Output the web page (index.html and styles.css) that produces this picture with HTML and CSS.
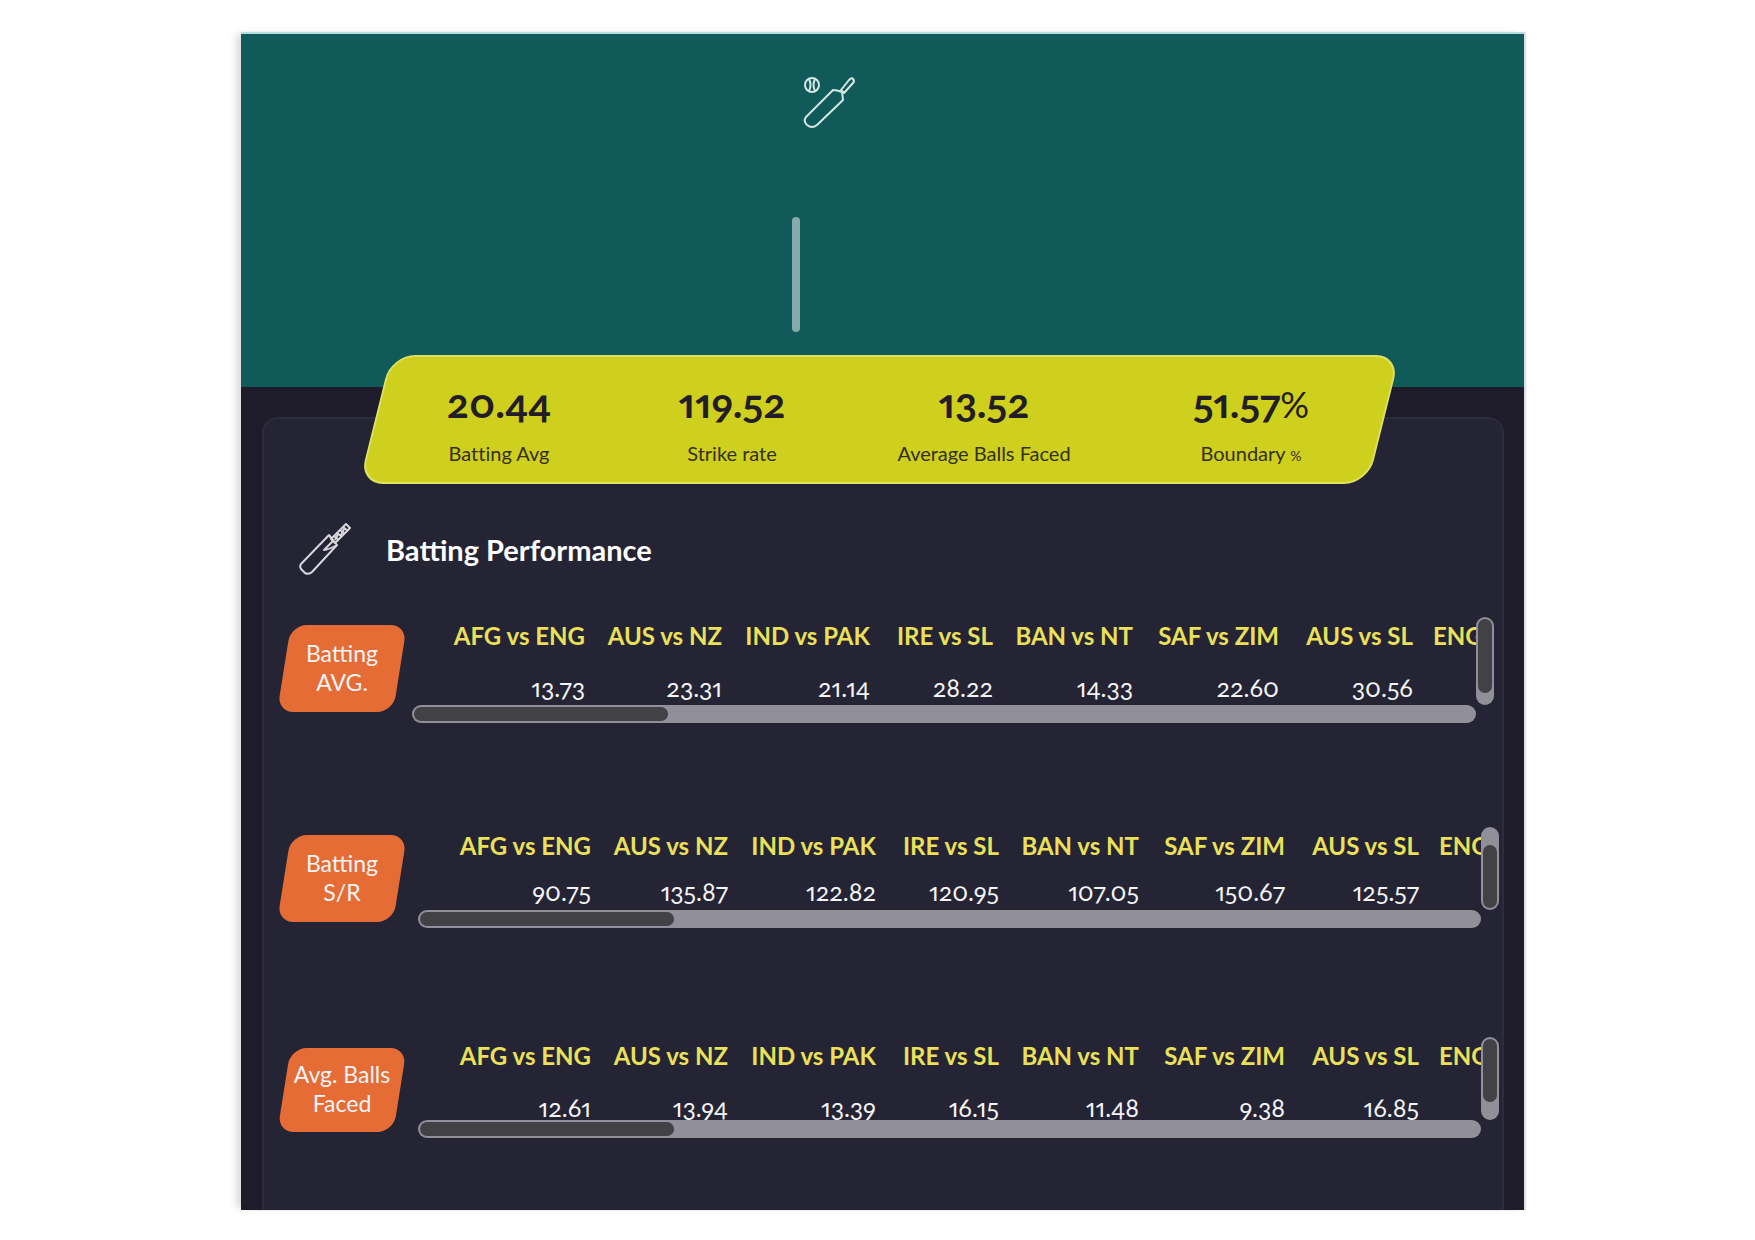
FILE: index.html
```
<!DOCTYPE html>
<html lang="en">
<head>
<meta charset="utf-8">
<meta name="viewport" content="width=device-width, initial-scale=1">
<title>Batting Performance</title>
<link rel="stylesheet" href="styles.css">
</head>
<body>
<main class="report">
  <header class="hero">
    <svg class="hero-icon" viewBox="0 0 54 56" aria-hidden="true">
      <circle cx="9" cy="10" r="7"/>
      <path d="M6 4q3 6 0 12M12 4q-3 6 0 12"/>
      <path d="M30 15L3 42Q0 46 4 50Q9 54 14 50L40 25L39 17Q34 15 30 15Z"/>
      <path d="M38 15L46 5Q49 2 50 4Q52 6 50 8L41 18Z"/>
    </svg>
    <div class="hero-divider"></div>
  </header>

  <section class="stats" aria-label="Batting summary">
    <div class="stat"><strong class="stat-value">20.44</strong><span class="stat-label">Batting Avg</span></div>
    <div class="stat"><strong class="stat-value">119.52</strong><span class="stat-label">Strike rate</span></div>
    <div class="stat"><strong class="stat-value">13.52</strong><span class="stat-label">Average Balls Faced</span></div>
    <div class="stat"><strong class="stat-value">51.57<span class="stat-unit">%</span></strong><span class="stat-label">Boundary <small class="stat-percent">%</small></span></div>
  </section>

  <section class="card">
    <div class="card-head">
      <svg class="card-icon" viewBox="0 0 54 56" aria-hidden="true">
        <path d="M31 13L3 42Q1 45 4 48L7 51Q11 53 14 50L39 23Z"/>
        <path d="M31 13L35 19L26 28Q30 28 39 23"/>
        <path d="M33 17L48 2L52 6L37 21Z"/>
        <path d="M36 14l5 4M39 11l5 4M42 8l5 4M45 5l5 4M37 18l3 -6M43 13l3 -6"/>
      </svg>
      <h1 class="card-title">Batting Performance</h1>
    </div>

    <div class="metric metric-avg">
      <div class="badge"><span>Batting<br>AVG.</span></div>
      <div class="scroller">
        <div class="viewport">
          <table class="matches">
            <colgroup><col class="c1"><col class="c2"><col class="c3"><col class="c4"><col class="c5"><col class="c6"><col class="c7"><col class="c8"></colgroup>
            <thead><tr><th>AFG vs ENG</th><th>AUS vs NZ</th><th>IND vs PAK</th><th>IRE vs SL</th><th>BAN vs NT</th><th>SAF vs ZIM</th><th>AUS vs SL</th><th class="last">ENG vs IND</th></tr></thead>
            <tbody><tr><td>13.73</td><td>23.31</td><td>21.14</td><td>28.22</td><td>14.33</td><td>22.60</td><td>30.56</td><td></td></tr></tbody>
          </table>
        </div>
        <div class="bar bar-y"><div class="thumb"></div></div>
        <div class="bar bar-x"><div class="thumb"></div></div>
      </div>
    </div>

    <div class="metric metric-rate">
      <div class="badge"><span>Batting<br>S/R</span></div>
      <div class="scroller">
        <div class="viewport">
          <table class="matches">
            <colgroup><col class="c1"><col class="c2"><col class="c3"><col class="c4"><col class="c5"><col class="c6"><col class="c7"><col class="c8"></colgroup>
            <thead><tr><th>AFG vs ENG</th><th>AUS vs NZ</th><th>IND vs PAK</th><th>IRE vs SL</th><th>BAN vs NT</th><th>SAF vs ZIM</th><th>AUS vs SL</th><th class="last">ENG vs IND</th></tr></thead>
            <tbody><tr><td>90.75</td><td>135.87</td><td>122.82</td><td>120.95</td><td>107.05</td><td>150.67</td><td>125.57</td><td></td></tr></tbody>
          </table>
        </div>
        <div class="bar bar-y"><div class="thumb"></div></div>
        <div class="bar bar-x"><div class="thumb"></div></div>
      </div>
    </div>

    <div class="metric metric-balls">
      <div class="badge"><span>Avg. Balls<br>Faced</span></div>
      <div class="scroller">
        <div class="viewport">
          <table class="matches">
            <colgroup><col class="c1"><col class="c2"><col class="c3"><col class="c4"><col class="c5"><col class="c6"><col class="c7"><col class="c8"></colgroup>
            <thead><tr><th>AFG vs ENG</th><th>AUS vs NZ</th><th>IND vs PAK</th><th>IRE vs SL</th><th>BAN vs NT</th><th>SAF vs ZIM</th><th>AUS vs SL</th><th class="last">ENG vs IND</th></tr></thead>
            <tbody><tr><td>12.61</td><td>13.94</td><td>13.39</td><td>16.15</td><td>11.48</td><td>9.38</td><td>16.85</td><td></td></tr></tbody>
          </table>
        </div>
        <div class="bar bar-y"><div class="thumb"></div></div>
        <div class="bar bar-x"><div class="thumb"></div></div>
      </div>
    </div>
  </section>
</main>
</body>
</html>
```
FILE: styles.css
```
* { box-sizing: border-box; }

body {
  margin: 0;
  padding: 32px 231px 31px 241px;
  background: #fff;
  color: #f4f4f6;
  font-family: Lato, "Open Sans", sans-serif;
  font-variant-numeric: oldstyle-nums proportional-nums;
}

.report {
  background: #1e1c2b;
  border-top: 2px solid #b5dedf;
  box-shadow: -7px 0 7px -2px #dcdce0, 2px 0 1px #dcdce2;
}

/* Teal banner */
.hero {
  height: 353px;
  padding-top: 41px;
  background: #105a59;
}
.hero-icon {
  display: block;
  width: 54px;
  height: 56px;
  margin-left: calc(50% - 80px);
}
.hero-divider {
  width: 8px;
  height: 115px;
  margin: 86px 0 0 calc(50% - 91px);
  border-radius: 4px;
  background: #86abab;
}
.hero-icon, .card-icon {
  fill: none;
  stroke: #d5e6e6;
  stroke-width: 2;
  stroke-linejoin: round;
}

/* Slanted summary strip, straddling banner and card */
.stats {
  position: relative;
  z-index: 1;
  display: grid;
  grid-template-columns: 240fr 226fr 278fr 256fr;
  height: 129px;
  margin: -32px 140px 0 134px;
  padding: 20px 5px 0 4px;
  color: #231d28;
  font-variant-ligatures: none;
}
.stats::before {
  content: "";
  position: absolute;
  inset: 0;
  z-index: -1;
  border: 2px solid #dde060;
  border-radius: 24px;
  background: #cfcf1d;
  transform: skewX(-14deg);
}
.stat {
  display: flex;
  flex-direction: column;
  align-items: center;
}
.stat-value {
  font-size: 41px;
  line-height: 56px;
  font-weight: 700;
}
.stat-unit {
  font-size: 36px;
  line-height: 36px;
  font-weight: 400;
}
.stat-label {
  font-size: 20px;
  line-height: 44px;
  color: #35301f;
}
.stat-percent { font-size: 14px; line-height: 14px; }

/* Performance card */
.card {
  margin: -67px 20px 0 21px;
  padding: 96px 0 0 16px;
  border: 2px solid #2b2c3c;
  border-bottom: 0;
  border-radius: 16px 16px 0 0;
  background: #252434;
}
.card-head {
  display: flex;
  align-items: center;
  gap: 34px;
  height: 70px;
  padding-left: 18px;
}
.card-icon {
  width: 54px;
  height: 56px;
  stroke: #d6d6dc;
}
.card-title {
  margin: 0;
  font-size: 29px;
  line-height: 36px;
  font-weight: 700;
  color: #fff;
}
.card-head + .metric { margin-top: 32px; }

.metric {
  display: flex;
  align-items: flex-start;
  gap: 18px;
  height: 210px;
  padding: 0 3px 0 4px;
}
.metric-avg { gap: 12px; padding-right: 8px; }
.metric-balls { height: 173px; }

.badge {
  position: relative;
  z-index: 0;
  flex: none;
  display: flex;
  align-items: center;
  justify-content: center;
  width: 116px;
  height: 87px;
  margin: 8px 0 0;
  padding-bottom: 2px;
  font-size: 23px;
  line-height: 29px;
  text-align: center;
  white-space: nowrap;
}
.metric-balls .badge {
  height: 84px;
  margin-top: 11px;
}
.badge::before {
  content: "";
  position: absolute;
  inset: 0;
  z-index: -1;
  border-radius: 16px;
  background: #e66c35;
  transform: skewX(-9deg);
}

.scroller {
  flex: 1;
  min-width: 0;
  display: grid;
  grid-template-columns: minmax(0, 1fr) 18px;
  grid-template-rows: auto 18px;
}
.viewport { height: 83px; overflow: hidden; }
.metric-avg .viewport { height: 88px; }

.bar {
  padding: 2px;
  border-radius: 9px;
  background: #918f99;
}
.bar .thumb { border-radius: 7px; background: #424145; }
.bar-x .thumb { width: 24%; height: 100%; }
.bar-y .thumb { width: 100%; height: 80%; }
.metric-avg .bar-y .thumb { height: 88%; }
.metric-rate .bar-y { display: flex; align-items: flex-end; }

/* Match tables */
.matches {
  table-layout: fixed;
  width: 1200px;
  border-collapse: collapse;
}
.c1 { width: 173px; }
.c2 { width: 137px; }
.c3 { width: 148px; }
.c4 { width: 123px; }
.c5 { width: 140px; }
.c6 { width: 146px; }
.c7 { width: 134px; }
.c8 { width: 199px; }
.matches th, .matches td {
  padding: 0;
  text-align: right;
  white-space: nowrap;
}
.matches th {
  height: 38px;
  font-size: 24px;
  line-height: 38px;
  font-weight: 700;
  color: #eae05a;
}
.matches .last { padding-left: 20px; text-align: left; }
.matches td {
  height: 50px;
  padding-top: 14px;
  font-size: 25px;
  line-height: 36px;
}
.metric-rate .matches td { padding-top: 8px; height: 44px; }
```
